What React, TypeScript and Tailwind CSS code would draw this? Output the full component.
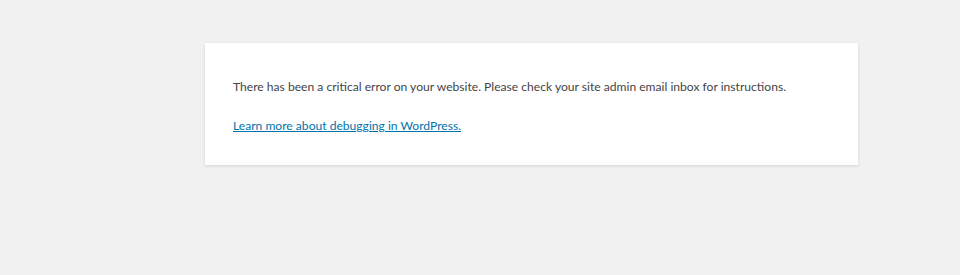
export default function App() {
  return (
    <div className="min-h-[275px] w-[960px] bg-[#f1f1f1] pt-[43px]" style={{ fontFamily: 'Lato, "Noto Sans", sans-serif' }}>
      <div className="ml-[205px] w-[653px] bg-white px-[28px] pt-[35px] pb-[30px] shadow-[0_1px_3px_rgba(0,0,0,0.13)]">
        <p className="text-[12.1px] leading-[18px] text-[#444]">
          There has been a critical error on your website. Please check your site admin email inbox for instructions.
        </p>
        <p className="mt-[21px] text-[12.1px] leading-[18px]">
          <a href="#" className="text-[#0073aa] underline">Learn more about debugging in WordPress.</a>
        </p>
      </div>
    </div>
  );
}
